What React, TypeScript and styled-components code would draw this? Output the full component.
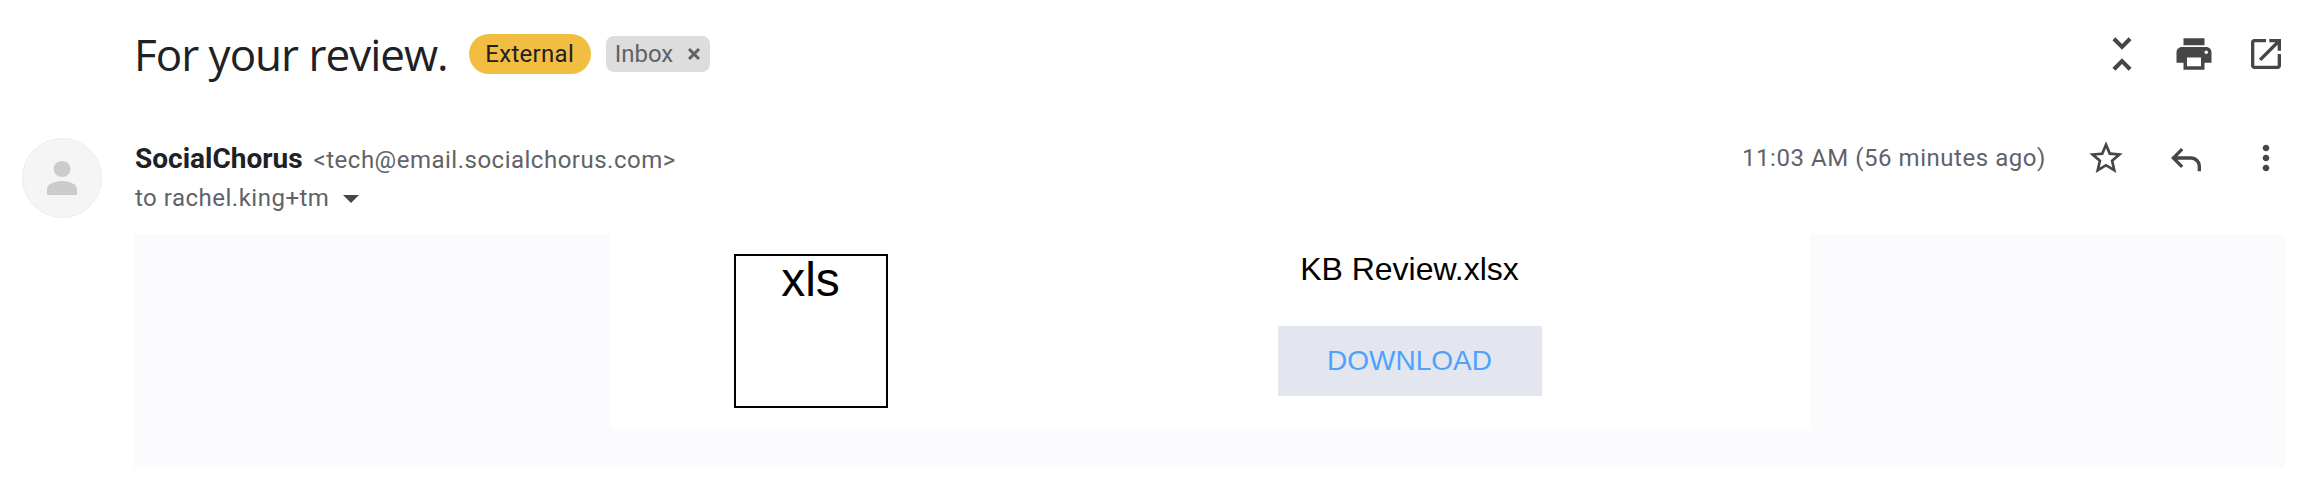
import React from 'react'
import styled, { createGlobalStyle } from 'styled-components'

const GlobalStyle = createGlobalStyle`
    html, body {
        margin: 0;
        padding: 0;
        background: #fff;
    }
    body {
        font-family: 'Roboto', 'Liberation Sans', sans-serif;
    }
`

const Page = styled.div`
    width: 2304px;
    height: 492px;
    overflow: hidden;
    background: #fff;
`

const Header = styled.header`
    display: flex;
    align-items: center;
    height: 108px;
    padding: 0 2px 0 134px;
`

const Subject = styled.h1`
    margin: 0 21px 0 0;
    font-family: 'Open Sans', sans-serif;
    font-weight: 400;
    font-size: 44px;
    letter-spacing: -1px;
    color: #202124;
`

const ExternalBadge = styled.span`
    display: flex;
    align-items: center;
    justify-content: center;
    width: 122px;
    height: 40px;
    margin-right: 15px;
    border-radius: 20px;
    background: #f2be42;
    color: #202124;
    font-size: 24px;
    letter-spacing: 0.3px;
`

const InboxChip = styled.span`
    display: flex;
    align-items: center;
    justify-content: space-between;
    box-sizing: border-box;
    width: 104px;
    height: 36px;
    padding: 0 9px;
    border-radius: 8px;
    background: #dddddd;
    color: #5f6368;
    font-size: 24px;
`

const IconGroup = styled.div<{ $step: number }>`
    display: flex;
    align-items: center;
    margin-left: auto;
    & > * {
        width: ${p => p.$step}px;
    }
`

const IconSlot = styled.span`
    display: flex;
    justify-content: center;
`

const Icon = styled.svg<{ $size: number }>`
    display: block;
    width: ${p => p.$size}px;
    height: ${p => p.$size}px;
    fill: #444746;
`

const MessageRow = styled.div`
    display: flex;
    height: 126px;
    padding: 0 0 0 22px;
    box-sizing: border-box;
    align-items: flex-start;
`

const Avatar = styled.div`
    display: flex;
    align-items: center;
    justify-content: center;
    box-sizing: border-box;
    flex: none;
    width: 80px;
    height: 80px;
    margin: 30px 33px 0 0;
    border-radius: 50%;
    background: #f5f5f5;
    border: 1px solid #ececec;
`

const SenderBlock = styled.div`
    padding-top: 32px;
    line-height: 38px;
`

const SenderLine = styled.div`
    font-size: 24px;
    letter-spacing: 0.5px;
    color: #5f6368;
    white-space: nowrap;
`

const SenderName = styled.strong`
    font-size: 28px;
    font-weight: 700;
    letter-spacing: 0;
    color: #202124;
    margin-right: 11px;
`

const Recipient = styled.div`
    display: flex;
    align-items: center;
    font-size: 24px;
    letter-spacing: 0.5px;
    color: #5f6368;
`

const Caret = styled.span`
    width: 0;
    height: 0;
    margin: 2px 0 0 14px;
    border-left: 8px solid transparent;
    border-right: 8px solid transparent;
    border-top: 8px solid #444746;
`

const MetaRight = styled.div`
    display: flex;
    align-items: center;
    margin: 0 -2px 0 auto;
    padding-top: 30px;
`

const Timestamp = styled.span`
    font-size: 24px;
    letter-spacing: 0.55px;
    color: #5f6368;
    margin-right: 20px;
    white-space: nowrap;
`

const MailBody = styled.div`
    display: flex;
    justify-content: center;
    align-items: flex-start;
    width: 2151px;
    height: 234px;
    margin-left: 134px;
    background: #fbfbfd;
`

const Card = styled.div`
    display: grid;
    grid-template-columns: 402px 796px;
    width: 1200px;
    height: 194px;
    background: #fff;
    font-family: 'Liberation Sans', Arial, sans-serif;
`

const FileCell = styled.div`
    display: flex;
    justify-content: center;
    padding-top: 20px;
`

const FileBox = styled.div`
    box-sizing: border-box;
    width: 154px;
    height: 154px;
    border: 2px solid #000;
    text-align: center;
    font-size: 48px;
    line-height: 48px;
    color: #000;
`

const DetailCell = styled.div`
    display: flex;
    flex-direction: column;
    align-items: center;
    padding-top: 13px;
`

const FileName = styled.div`
    font-size: 32px;
    line-height: 44px;
    color: #000;
`

const DownloadButton = styled.a`
    display: flex;
    align-items: center;
    justify-content: center;
    width: 264px;
    height: 70px;
    margin-top: 35px;
    background: #e3e6ee;
    color: #4da3fb;
    font-size: 28px;
    text-decoration: none;
`

const App: React.FC = () => {
    return (
        <Page>
            <GlobalStyle />
            <Header>
                <Subject>For your review.</Subject>
                <ExternalBadge>External</ExternalBadge>
                <InboxChip>
                    Inbox
                    <svg width="14" height="14" viewBox="0 0 14 14">
                        <path d="M2 2l10 10M12 2L2 12" stroke="#5f6368" strokeWidth="3" />
                    </svg>
                </InboxChip>
                <IconGroup $step={72}>
                    <IconSlot>
                        <Icon $size={50} viewBox="0 0 24 24">
                            <path d="M7.41 18.59L8.83 20 12 16.83 15.17 20l1.41-1.41L12 14l-4.59 4.59zm9.18-13.18L15.17 4 12 7.17 8.83 4 7.41 5.41 12 10l4.59-4.59z" />
                        </Icon>
                    </IconSlot>
                    <IconSlot>
                        <Icon $size={42} viewBox="0 0 24 24">
                            <path d="M19 8H5c-1.66 0-3 1.34-3 3v6h4v4h12v-4h4v-6c0-1.66-1.34-3-3-3zm-3 11H8v-5h8v5zm3-7c-.55 0-1-.45-1-1s.45-1 1-1 1 .45 1 1-.45 1-1 1zm-1-9H6v4h12V3z" />
                        </Icon>
                    </IconSlot>
                    <IconSlot>
                        <Icon $size={40} viewBox="0 0 24 24">
                            <path d="M19 19H5V5h7V3H5c-1.11 0-2 .9-2 2v14c0 1.1.89 2 2 2h14c1.1 0 2-.9 2-2v-7h-2v7zM14 3v2h3.59l-9.83 9.83 1.41 1.41L19 6.41V10h2V3h-7z" />
                        </Icon>
                    </IconSlot>
                </IconGroup>
            </Header>
            <MessageRow>
                <Avatar>
                    <svg width="32" height="36" viewBox="0 0 32 36">
                        <ellipse cx="16" cy="9" rx="8.5" ry="8" fill="#cccccc" />
                        <path d="M1 35v-6c0-5 8-8 15-8s15 3 15 8v6z" fill="#cccccc" />
                    </svg>
                </Avatar>
                <SenderBlock>
                    <SenderLine>
                        <SenderName>SocialChorus</SenderName>
                        {'<tech@email.socialchorus.com>'}
                    </SenderLine>
                    <Recipient>
                        to rachel.king+tm
                        <Caret />
                    </Recipient>
                </SenderBlock>
                <MetaRight>
                    <Timestamp>11:03 AM (56 minutes ago)</Timestamp>
                    <IconGroup $step={80}>
                        <IconSlot>
                            <Icon $size={40} viewBox="0 0 24 24">
                                <path d="M22 9.24l-7.19-.62L12 2 9.19 8.63 2 9.24l5.46 4.73L5.82 21 12 17.27 18.18 21l-1.63-7.03L22 9.24zM12 15.4l-3.76 2.27 1-4.28-3.32-2.88 4.38-.38L12 6.1l1.71 4.04 4.38.38-3.32 2.88 1 4.28L12 15.4z" />
                            </Icon>
                        </IconSlot>
                        <IconSlot>
                            <Icon $size={40} viewBox="0 0 24 24">
                                <path d="M21 20h-2v-3c0-2.2-1.8-4-4-4H6.83l3.58 3.59L9 18l-6-6 6-6 1.41 1.41L6.83 11H15c3.31 0 6 2.69 6 6v3z" />
                            </Icon>
                        </IconSlot>
                        <IconSlot>
                            <Icon $size={40} viewBox="0 0 24 24">
                                <path d="M12 8c1.1 0 2-.9 2-2s-.9-2-2-2-2 .9-2 2 .9 2 2 2zm0 2c-1.1 0-2 .9-2 2s.9 2 2 2 2-.9 2-2-.9-2-2-2zm0 6c-1.1 0-2 .9-2 2s.9 2 2 2 2-.9 2-2-.9-2-2-2z" />
                            </Icon>
                        </IconSlot>
                    </IconGroup>
                </MetaRight>
            </MessageRow>
            <MailBody>
                <Card>
                    <FileCell>
                        <FileBox>xls</FileBox>
                    </FileCell>
                    <DetailCell>
                        <FileName>KB Review.xlsx</FileName>
                        <DownloadButton>DOWNLOAD</DownloadButton>
                    </DetailCell>
                </Card>
            </MailBody>
        </Page>
    )
}

export default App
